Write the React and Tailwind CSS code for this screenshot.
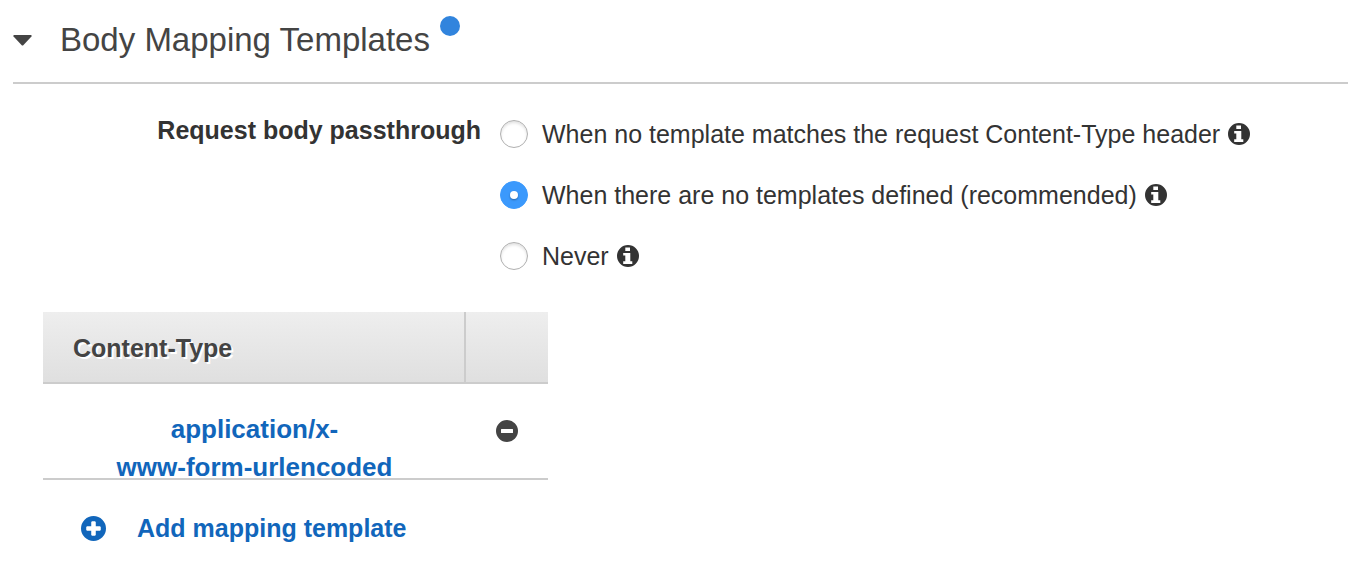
import { useState } from 'react'

const PASSTHROUGH_OPTIONS = [
  { value: 'no_match', label: 'When no template matches the request Content-Type header' },
  { value: 'no_templates', label: 'When there are no templates defined (recommended)' },
  { value: 'never', label: 'Never' },
]

// ── Icons ─────────────────────────────────────────────────────────────────────

// glyphs cut out of a 22 unit disc
const ICONS = {
  info: 'M8.300 2.500H13V6H8.300ZM6.200 8H13.300V16.200H15.300V19H6.200V16.200H8.300V10.600H6.200Z',
  minus: 'M5.500 9H16.500Q17 9 17 9.500V12.500Q17 13 16.500 13H5.500Q5 13 5 12.500V9.500Q5 9 5.500 9Z',
  plus: 'M9.700 4.600H12.300L13 5.300V9H16.700L17.400 9.700V12.300L16.700 13H13V16.700L12.300 17.400H9.700L9 16.700V13H5.300L4.600 12.300V9.700L5.300 9H9V5.300Z',
}

function Icon({ name, className }) {
  return (
    <svg viewBox="0 0 22 22" className={className} fill="currentColor" fillRule="evenodd" aria-hidden="true">
      <path d={`M11 0A11 11 0 1 1 11 22A11 11 0 1 1 11 0Z${ICONS[name]}`} />
    </svg>
  )
}

function PassthroughOption({ option, checked, onChange }) {
  return (
    <div className="flex items-center gap-2">
      <label className="flex items-center gap-3.5">
        <input
          type="radio"
          name="passthrough"
          value={option.value}
          checked={checked}
          onChange={() => onChange(option.value)}
          className="grid size-7 shrink-0 appearance-none place-items-center rounded-full border border-[#b0b0b0] bg-white shadow-[inset_0_2px_3px_rgba(0,0,0,0.12)] checked:border-[#3b99fc] checked:bg-[#3b99fc] checked:shadow-none checked:before:size-2 checked:before:rounded-full checked:before:bg-white checked:before:shadow-[0_1px_2px_rgba(0,0,0,0.35)] checked:before:content-['']"
        />
        {option.label}
      </label>
      <button type="button" aria-label={`About: ${option.label}`}>
        <Icon name="info" className="size-[22px]" />
      </button>
    </div>
  )
}

export default function App() {
  const [open, setOpen] = useState(true)
  const [passthrough, setPassthrough] = useState('no_templates')

  return (
    <main className="bg-white pl-[13px] font-['Liberation_Sans',Arial,sans-serif] text-[25px] leading-[38px] text-[#333]">

      {/* ── Section header ───────────────────────────────────────────────── */}
      <header className="flex border-b-2 border-[#ccc] pt-4 pb-[18px]">
        <h2 className="text-[33px] leading-12 text-[#444]">
          <button
            type="button"
            aria-expanded={open}
            onClick={() => setOpen(v => !v)}
            className="flex items-center gap-7"
          >
            <svg viewBox="0 0 19 11" className="h-[11px] w-[19px]" fill="currentColor" aria-hidden="true">
              <path d="M1 0H18Q19.200.7 18.500 1.500L10.500 10Q9.500 11 8.500 10L.5 1.500Q-.2.7 1 0Z" />
            </svg>
            Body Mapping Templates
          </button>
        </h2>
        <span className="ml-2.5 size-5 rounded-full bg-[#3184dd]" />
      </header>

      {open && (
        <>
          {/* ── Request body passthrough ─────────────────────────────────── */}
          <div role="radiogroup" aria-labelledby="passthrough-label" className="flex gap-[19px] pt-[31px]">
            <div id="passthrough-label" className="-mt-1 w-[468px] shrink-0 text-right font-bold">
              Request body passthrough
            </div>
            <div className="flex flex-col gap-[23px]">
              {PASSTHROUGH_OPTIONS.map(option => (
                <PassthroughOption
                  key={option.value}
                  option={option}
                  checked={passthrough === option.value}
                  onChange={setPassthrough}
                />
              ))}
            </div>
          </div>

          {/* ── Templates ────────────────────────────────────────────────── */}
          <div className="px-[30px] pt-[37px] pb-8">
            <table className="w-[505px] table-fixed border-separate border-spacing-0 font-bold">
              <thead className="text-left text-[#444]">
                <tr className="h-[72px] bg-linear-to-b from-[#eee] to-[#dfdfdf]">
                  <th className="w-[423px] border-r-2 border-b-2 border-[#ccc] pt-0.5 pl-[30px] [text-shadow:2px_2px_0_#fff]">
                    Content-Type
                  </th>
                  <th aria-label="Actions" className="border-b-2 border-[#ccc]" />
                </tr>
              </thead>
              <tbody>
                <tr className="align-top">
                  <td className="border-b-2 border-[#ccc] text-center">
                    <div className="h-[94px] pt-[26px]">
                      <a href="#template" className="text-[26px] text-[#1166bb]">
                        application/x-<br />www-form-urlencoded
                      </a>
                    </div>
                  </td>
                  <td className="border-b-2 border-[#ccc]">
                    <button type="button" aria-label="Remove template" className="mx-auto mt-9 block text-[#444]">
                      <Icon name="minus" className="size-[22px]" />
                    </button>
                  </td>
                </tr>
              </tbody>
            </table>

            <button type="button" className="mt-[29px] ml-[38px] flex items-center gap-[31px] font-bold text-[#1166bb]">
              <Icon name="plus" className="size-[25px]" />
              Add mapping template
            </button>
          </div>
        </>
      )}
    </main>
  )
}
